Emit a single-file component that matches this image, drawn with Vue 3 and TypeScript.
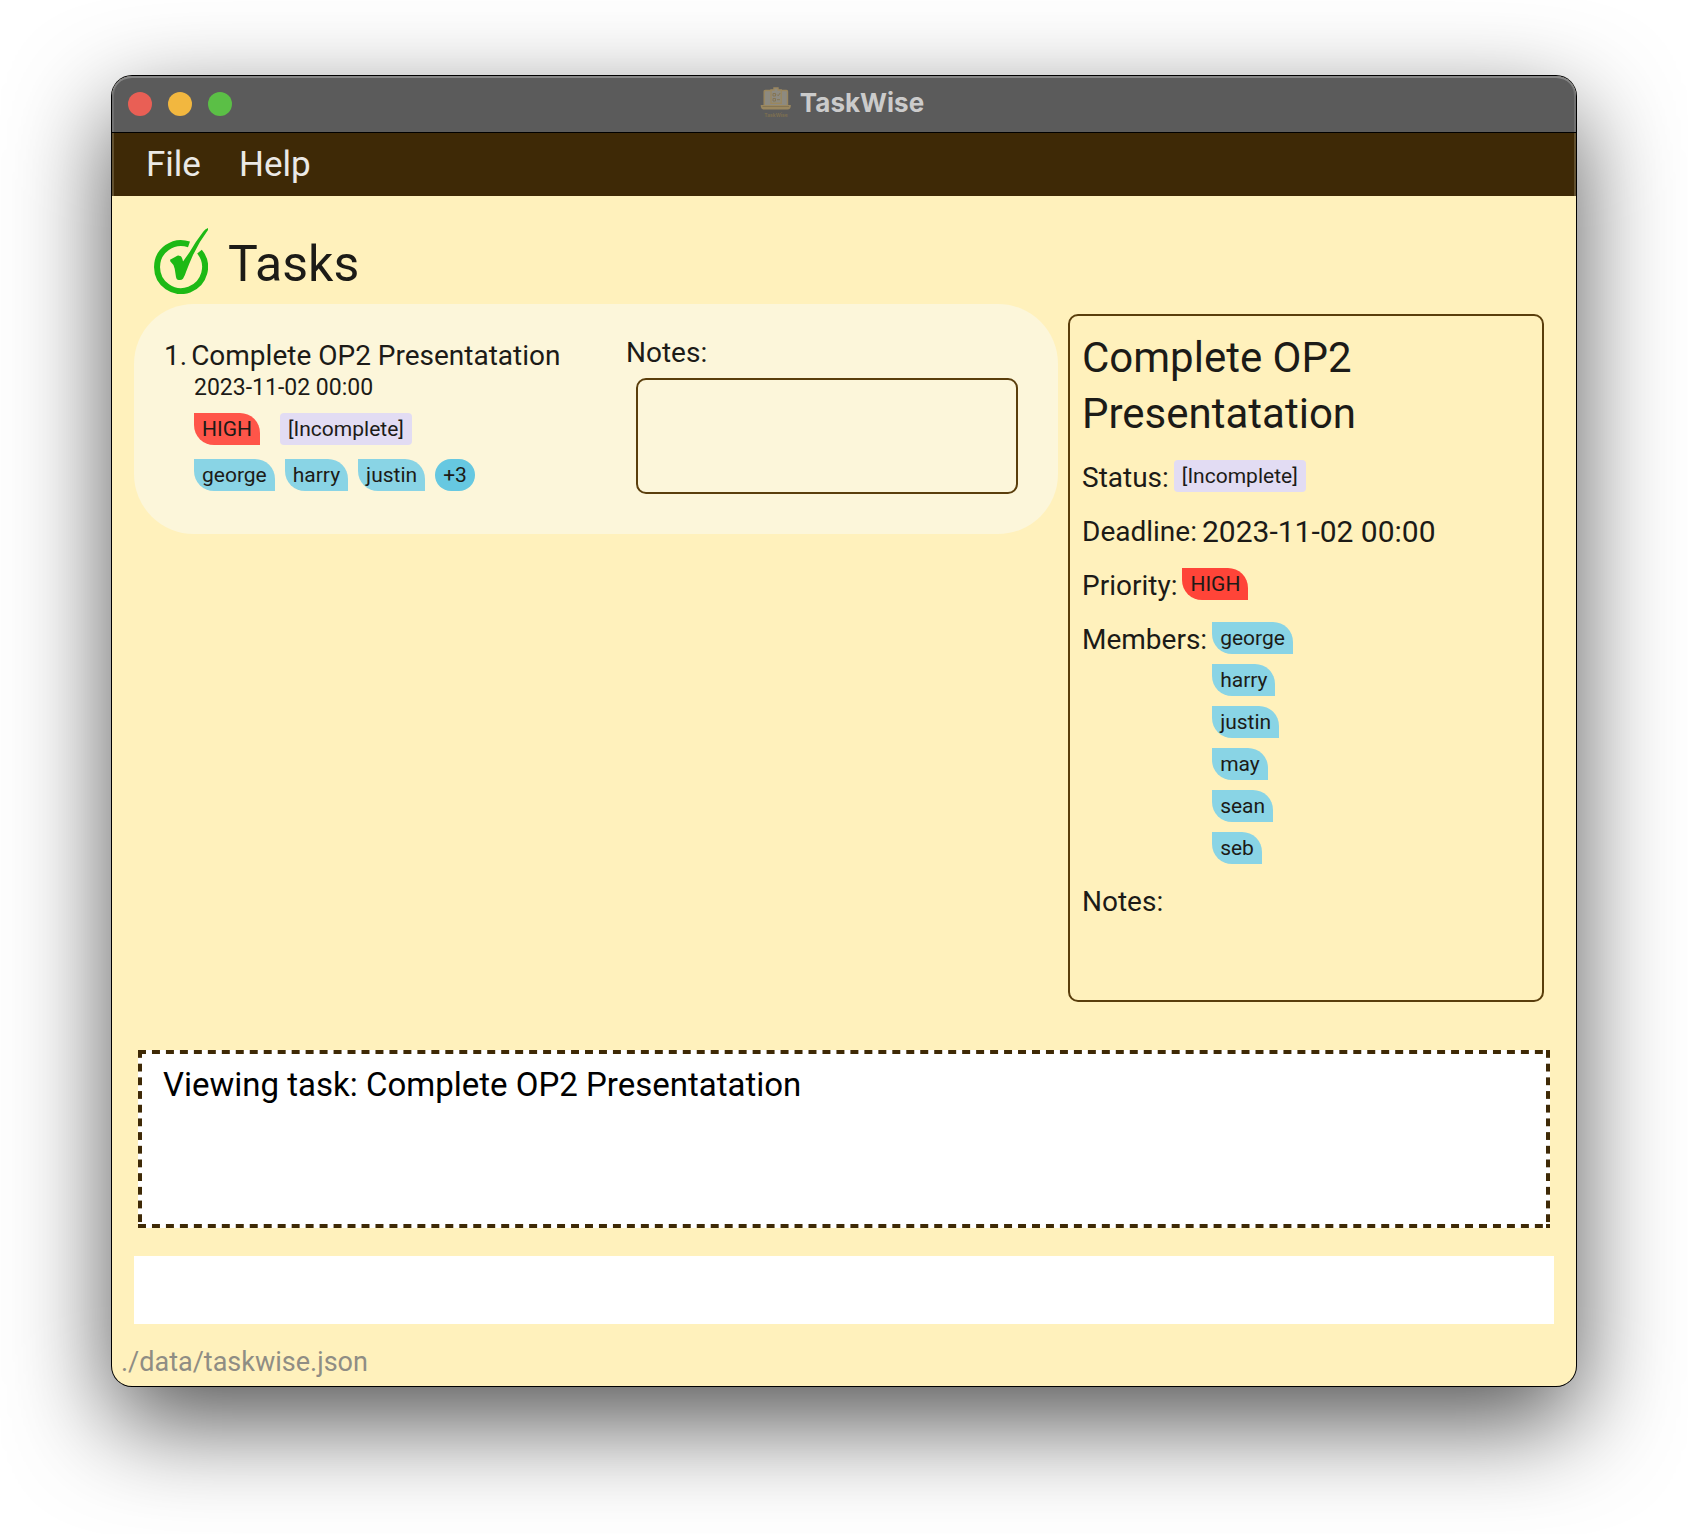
<script setup lang="ts">
import { ref } from 'vue'

interface Task {
  id: number
  name: string
  deadline: string
  priority: string
  status: string
  members: string[]
  note: string
}

const menus = ['File', 'Help']

const tasks = ref<Task[]>([
  {
    id: 1,
    name: 'Complete OP2 Presentatation',
    deadline: '2023-11-02 00:00',
    priority: 'HIGH',
    status: '[Incomplete]',
    members: ['george', 'harry', 'justin', 'may', 'sean', 'seb'],
    note: '',
  },
])

const selected = ref<Task>(tasks.value[0])
const result = ref('Viewing task: ' + selected.value.name)
const command = ref('')
const savePath = './data/taskwise.json'
const shownMembers = 3
</script>

<template>
  <div class="desktop">
    <div class="window">
      <header class="titlebar">
        <div class="lights">
          <button class="light close" type="button" aria-label="Close"></button>
          <button class="light minimise" type="button" aria-label="Minimise"></button>
          <button class="light zoom" type="button" aria-label="Zoom"></button>
        </div>
        <div class="app-title">
          <svg class="app-icon" viewBox="0 0 32 32" aria-hidden="true">
            <path d="M4.200 18V4.500Q4.200 3.500 5.200 3.500H26.500Q27.500 3.500 27.500 4.500V18" fill="#8d8a80" stroke="#9a875f" stroke-width="1.400" />
            <path d="M.7 18H30.800Q31 22.500 27.500 22.500H4Q.7 22.500 .7 18z" fill="#9a875f" />
            <path d="M2.500 19.500H29" stroke="#857553" stroke-width="1" />
            <path d="M11 3h3V1h4v2h3.200v13.200H11z" fill="#8d8a80" stroke="#9a875f" stroke-width="1.400" />
            <path d="M13 6.500h2.500v2.500H13zM13 11.500h2.500v2.500H13zM17 7.500l1.200 1.300L20.200 6M17 12.700h3" fill="none" stroke="#857553" stroke-width="1" />
            <text x="16" y="30" text-anchor="middle">TaskWise</text>
          </svg>
          <span>TaskWise</span>
        </div>
      </header>

      <nav class="menubar">
        <button v-for="menu in menus" :key="menu" type="button">{{ menu }}</button>
      </nav>

      <main class="content">
        <section class="task-list">
          <h1>
            <svg class="tick" viewBox="0 0 54 66" aria-hidden="true">
              <path d="M35 16.400A24 24 0 1 0 45.500 23.700" fill="none" stroke="#1db915" stroke-width="6" />
              <path
                d="M54 0Q51 1 49 4Q42 13 35.700 24L29 33.500Q28 28 26 28Q24 27 22 28.500L16 31.700Q16 33.500 17.500 34.700Q20.500 37 20.700 40.700L22 49Q22.500 52 24.700 52Q27.500 52.500 29 50.700Q31 47.500 32 44Q35 36 39 27Q45 14 54 2Z"
                fill="#1db915"
              />
            </svg>
            <span>Tasks</span>
          </h1>
          <article v-for="task in tasks" :key="task.id" class="card">
            <div class="summary">
              <h2><span>{{ task.id }}.</span><span>{{ task.name }}</span></h2>
              <div class="facts">
                <time>{{ task.deadline }}</time>
                <div class="chips spaced">
                  <span class="chip leaf high">{{ task.priority }}</span>
                  <span class="chip status">{{ task.status }}</span>
                </div>
                <div class="chips">
                  <span v-for="member in task.members.slice(0, shownMembers)" :key="member" class="chip leaf member">{{ member }}</span>
                  <span class="chip more">+{{ task.members.length - shownMembers }}</span>
                </div>
              </div>
            </div>
            <div class="notes">
              <label for="card-note">Notes:</label>
              <textarea id="card-note" v-model="task.note" readonly></textarea>
            </div>
          </article>
        </section>

        <aside class="detail">
          <h2>{{ selected.name }}</h2>
          <dl>
            <div><dt>Status:</dt><dd><span class="chip status">{{ selected.status }}</span></dd></div>
            <div><dt>Deadline:</dt><dd class="value">{{ selected.deadline }}</dd></div>
            <div><dt>Priority:</dt><dd><span class="chip leaf high">{{ selected.priority }}</span></dd></div>
            <div>
              <dt>Members:</dt>
              <dd class="members">
                <span v-for="member in selected.members" :key="member" class="chip leaf member">{{ member }}</span>
              </dd>
            </div>
            <div><dt>Notes:</dt><dd>{{ selected.note }}</dd></div>
          </dl>
        </aside>
      </main>

      <textarea v-model="result" class="result" aria-label="Result" readonly></textarea>
      <input v-model="command" class="command" type="text" aria-label="Command" />
      <footer>{{ savePath }}</footer>
    </div>
  </div>
</template>

<style>
body {
  margin: 0;
  background: #fff;
}
</style>

<style scoped>
* {
  box-sizing: border-box;
}

.desktop {
  display: flex;
  min-height: 100vh;
  padding: 76px 112px 148px;
  overflow: hidden;
  font-family: Roboto, 'Liberation Sans', sans-serif;
  color: #1c1b17;
}

h1,
h2,
dl,
dd {
  margin: 0;
  font-weight: 400;
}

button,
input,
textarea {
  font: inherit;
  color: inherit;
  border: 0;
  border-radius: 0;
  outline: 0;
  background: none;
  padding: 0;
}

textarea {
  display: block;
  resize: none;
}

.window {
  position: relative;
  display: flex;
  flex: 1;
  flex-direction: column;
  min-width: 0;
  border-radius: 20px;
  background: #fff1bc;
  box-shadow:
    0 0 0 1px #000,
    0 36px 100px rgba(0, 0, 0, 0.68);
}

.titlebar {
  display: grid;
  grid-template-columns: 1fr auto 1fr;
  align-items: center;
  height: 57px;
  padding: 0 16px;
  border-bottom: 1px solid #000;
  border-radius: 20px 20px 0 0;
  background: #5b5b5b;
  box-shadow: inset 0 2px 0 #868686, inset 2px 0 0 #707070, inset -2px 0 0 #707070;
}

.lights {
  display: flex;
  gap: 16px;
}

.light {
  width: 24px;
  height: 24px;
  border-radius: 50%;
}

.close {
  background: #e95f55;
}

.minimise {
  background: #f2b73f;
}

.zoom {
  background: #5bbf46;
}

.app-title {
  display: flex;
  align-items: center;
  gap: 8px;
  padding: 0 4px 2px 0;
  font: 700 26px/32px Inter, Roboto, sans-serif;
  color: #cbcbcb;
}

.app-icon {
  width: 32px;
  height: 32px;
}

.app-icon text {
  font: 600 5px Inter, sans-serif;
  fill: #80714f;
}

.menubar {
  display: flex;
  align-items: center;
  gap: 38px;
  height: 63px;
  padding: 0 34px;
  background: #3e2906;
  box-shadow: inset 2px 0 0 #61502f, inset -2px 0 0 #61502f;
  font-size: 35px;
  line-height: 42px;
  color: #ebe9e6;
}

.content {
  display: flex;
  flex: 1;
  gap: 10px;
  padding: 32px 32px 48px 22px;
}

.task-list {
  flex: 1;
  min-width: 0;
}

h1 {
  display: flex;
  align-items: center;
  gap: 20px;
  height: 66px;
  padding-left: 20px;
  font-size: 50px;
  line-height: 60px;
}

h1 span {
  padding-top: 6px;
}

.tick {
  width: 54px;
  height: 66px;
}

.card {
  display: flex;
  margin-top: 10px;
  padding: 34px 40px 40px 30px;
  border-radius: 60px;
  background: #fcf6da;
}

.summary {
  flex: 1;
  min-width: 0;
}

.card h2 {
  display: flex;
  gap: 4px;
  font-size: 28px;
  line-height: 36px;
}

.facts {
  display: flex;
  flex-direction: column;
  padding-left: 30px;
}

.facts time {
  margin-bottom: 11px;
  font-size: 23px;
  line-height: 28px;
}

.chips {
  display: flex;
  gap: 10px;
}

.chips.spaced {
  gap: 20px;
  margin-bottom: 14px;
}

.chip {
  display: block;
  padding: 0 8px;
  font-size: 21px;
  line-height: 32px;
}

.leaf {
  border-radius: 0 20px;
}

.high {
  background: #ff4438;
}

.card .high {
  background: #ff5549;
}

.status {
  border-radius: 4px;
  background: #e2dcf3;
}

.member {
  background: #89d4e5;
}

.more {
  border-radius: 16px;
  background: #66c8e1;
}

.notes {
  flex: 0 0 392px;
  font-size: 28px;
  line-height: 30px;
}

.notes label {
  display: block;
}

.notes textarea {
  width: 382px;
  height: 116px;
  margin: 10px 0 0 10px;
  border: 2px solid #5a3e0c;
  border-radius: 10px;
}

.detail {
  flex: 0 0 476px;
  margin-top: 86px;
  padding: 14px 12px;
  border: 2px solid #5a3e0c;
  border-radius: 10px;
}

.detail h2 {
  font-size: 42px;
  line-height: 56px;
}

dl {
  display: flex;
  flex-direction: column;
  gap: 18px;
  margin-top: 18px;
}

dl > div {
  display: flex;
  align-items: flex-start;
  gap: 5px;
  font-size: 28px;
  line-height: 36px;
}

.value {
  font-size: 30px;
}

.members {
  display: flex;
  flex-direction: column;
  align-items: flex-start;
  gap: 10px;
  padding-bottom: 2px;
}

.result {
  --dash: linear-gradient(90deg, #3e2906 8px, transparent 8px);
  --dash-v: linear-gradient(#3e2906 8px, transparent 8px);
  height: 178px;
  margin: 0 26px;
  padding: 15px 25px;
  background:
    linear-gradient(#3e2906, #3e2906) 100% 100% / 4px 4px no-repeat,
    var(--dash) 0 0 / 14px 4px round no-repeat,
    var(--dash) 0 100% / 14px 4px round no-repeat,
    var(--dash-v) 0 0 / 4px 14px no-repeat round,
    var(--dash-v) 100% 0 / 4px 14px no-repeat round,
    #fff;
  font-size: 33px;
  line-height: 40px;
  color: #000;
}

.command {
  height: 68px;
  margin: 28px 22px 0;
  padding: 0 20px;
  background: #fff;
  font-size: 33px;
}

footer {
  height: 62px;
  padding: 20px 9px 0;
  font-size: 27px;
  line-height: 36px;
  color: #8f8d84;
}
</style>
